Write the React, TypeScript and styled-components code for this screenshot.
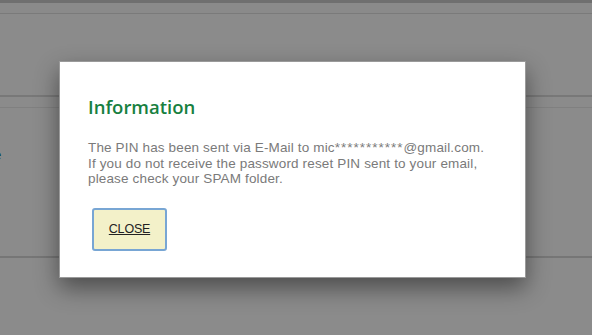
import styled, { createGlobalStyle } from 'styled-components'

const GlobalStyle = createGlobalStyle`
  html, body {
    margin: 0;
    padding: 0;
    background: #ffffff;
  }
  body {
    font-family: 'Liberation Sans', Arial, sans-serif;
  }
`

const Page = styled.div`
  position: relative;
  width: 592px;
  height: 335px;
  overflow: hidden;
  background: #f4f4f4;
  display: flex;
  flex-direction: column;
`

const TopBar = styled.div`
  height: 14px;
  border-top: 3px solid #c4c4c4;
  border-bottom: 1px solid #d6d6d6;
  background: #f2f2f2;
  box-sizing: border-box;
`

const Section = styled.div`
  margin-top: 81px;
  height: 163px;
  border-top: 2px solid #d4d4d4;
  border-bottom: 2px solid #cfcfcf;
  background: #f5f5f5;
  box-sizing: border-box;
  display: flex;
  flex-direction: column;
`

const SectionRule = styled.div`
  margin-top: 10px;
  border-top: 1px solid #e2e2e2;
`

const SideLink = styled.span`
  margin-top: 38px;
  margin-left: -7px;
  font-size: 15px;
  line-height: 18px;
  color: #0f6f63;
`

const Overlay = styled.div`
  position: absolute;
  inset: 0;
  background: rgba(0, 0, 0, 0.43);
`

const Modal = styled.div`
  position: absolute;
  left: 59px;
  top: 61px;
  width: 467px;
  height: 217px;
  box-sizing: border-box;
  background: #ffffff;
  border: 1px solid #9a9a9a;
  box-shadow: 0 10px 22px rgba(0, 0, 0, 0.45);
  padding: 33px 20px 0 28px;
  display: flex;
  flex-direction: column;
`

const Title = styled.h2`
  margin: 0;
  font-family: 'Open Sans', 'Liberation Sans', Arial, sans-serif;
  font-size: 18.5px;
  font-weight: 600;
  line-height: 24px;
  color: #17803f;
`

const Message = styled.p`
  margin: 21px 0 0 0;
  font-size: 13.5px;
  line-height: 15.5px;
  letter-spacing: 0.15px;
  white-space: nowrap;
  color: #7a7a7a;
`

const Masked = styled.span`
  letter-spacing: 1px;
`

const CloseButton = styled.button`
  margin: 21px 0 0 4px;
  align-self: flex-start;
  width: 75px;
  height: 43px;
  box-sizing: border-box;
  background: #f3f1c9;
  border: 2px solid #78a6d4;
  border-radius: 3px;
  font-family: 'Liberation Sans', Arial, sans-serif;
  font-size: 12.5px;
  letter-spacing: -0.2px;
  color: #222222;
  text-decoration: underline;
  cursor: pointer;
`

function App() {
  return (
    <>
      <GlobalStyle />
      <Page>
        <TopBar />
        <Section>
          <SectionRule />
          <SideLink>e</SideLink>
        </Section>
        <Overlay />
        <Modal>
          <Title>Information</Title>
          <Message>
            The PIN has been sent via E-Mail to mic<Masked>***********</Masked>@gmail.com.
            <br />
            If you do not receive the password reset PIN sent to your email,
            <br />
            please check your SPAM folder.
          </Message>
          <CloseButton>CLOSE</CloseButton>
        </Modal>
      </Page>
    </>
  )
}

export default App
